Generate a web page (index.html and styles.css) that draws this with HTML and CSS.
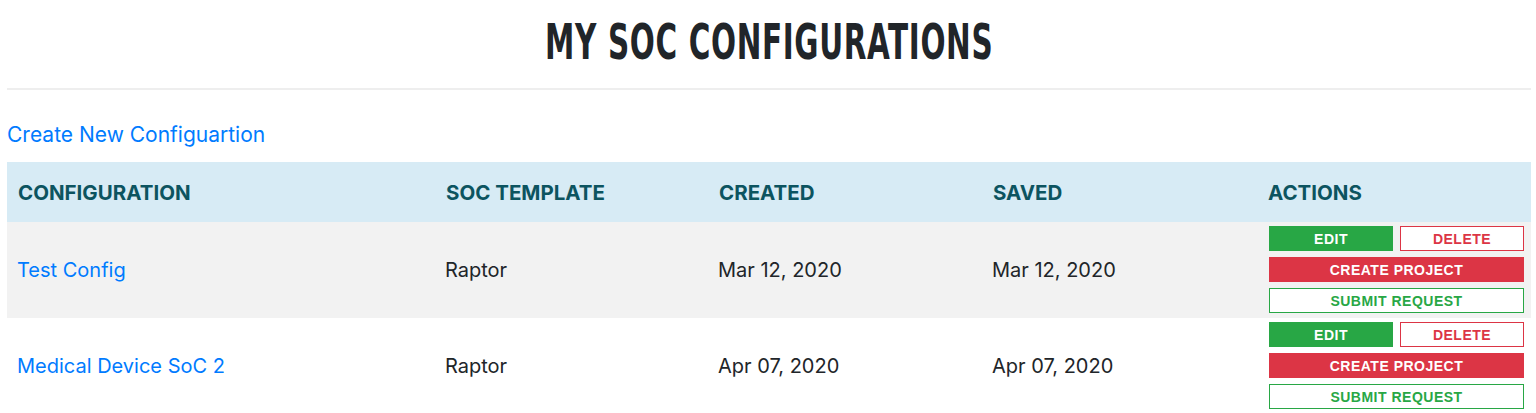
FILE: index.html
```html
<!DOCTYPE html>
<html lang="en">

<head>
  <meta charset="UTF-8">
  <meta name="viewport" content="width=device-width, initial-scale=1.0">
  <title>My SoC Configurations</title>
  <link rel="stylesheet" href="styles.css">
</head>

<body>
  <div class="page">
    <h1 class="title"><span>MY SOC CONFIGURATIONS</span></h1>

    <a class="create-link" href="#">Create New Configuartion</a>

    <table class="configs">
      <colgroup>
        <col style="width: 428px">
        <col style="width: 273px">
        <col style="width: 274px">
        <col style="width: 275px">
        <col>
      </colgroup>
      <thead>
        <tr>
          <th>Configuration</th>
          <th>SoC Template</th>
          <th>Created</th>
          <th>Saved</th>
          <th>Actions</th>
        </tr>
      </thead>
      <tbody>
        <tr>
          <td><a href="#">Test Config</a></td>
          <td>Raptor</td>
          <td>Mar 12, 2020</td>
          <td>Mar 12, 2020</td>
          <td class="actions">
            <div class="btn-grid">
              <button class="btn btn-success">Edit</button>
              <button class="btn btn-outline-danger">Delete</button>
              <button class="btn btn-danger wide">Create Project</button>
              <button class="btn btn-outline-success wide">Submit Request</button>
            </div>
          </td>
        </tr>
        <tr>
          <td><a href="#">Medical Device SoC 2</a></td>
          <td>Raptor</td>
          <td>Apr 07, 2020</td>
          <td>Apr 07, 2020</td>
          <td class="actions">
            <div class="btn-grid">
              <button class="btn btn-success">Edit</button>
              <button class="btn btn-outline-danger">Delete</button>
              <button class="btn btn-danger wide">Create Project</button>
              <button class="btn btn-outline-success wide">Submit Request</button>
            </div>
          </td>
        </tr>
      </tbody>
    </table>
  </div>
</body>

</html>
```

FILE: styles.css
```css
/* 基础排版 */
body {
  margin: 0;
  font-family: Inter, "Liberation Sans", Arial, sans-serif;
  color: #212529;
  background-color: #fff;
}

.page {
  padding: 0 5px 0 7px;
}

/* 页面标题：没有 Oswald，用压窄的粗体代替 */
.title {
  margin: 0;
  padding: 14px 0 18px;
  border-bottom: 2px solid #eeeeee;
  text-align: center;
  font-family: "DejaVu Sans Condensed", "DejaVu Sans", sans-serif;
  font-weight: 700;
  font-size: 50px;
  line-height: 56px;
  color: #212529;
}

.title span {
  display: inline-block;
  transform: scaleX(0.655);
  letter-spacing: 1px;
}

.create-link {
  display: block;
  margin: 30px 0 12px;
  font-size: 21px;
  line-height: 30px;
  color: #007bff;
  text-decoration: none;
}

/* 表格 */
.configs {
  width: 1524px;
  border-collapse: collapse;
  table-layout: fixed;
  font-size: 20px;
  border-bottom: 2px solid #eeeeee;
}

.configs th {
  height: 60px;
  padding: 0 11px;
  text-align: left;
  text-transform: uppercase;
  font-size: 20.5px;
  font-weight: 700;
  color: #0c5460;
  background-color: #d7ebf5;
}

.configs td {
  padding: 4px 10px 5px;
  vertical-align: middle;
}

.configs tbody tr:nth-child(odd) {
  background-color: #f2f2f2;
}

.configs td a {
  color: #007bff;
  text-decoration: none;
}

.configs td.actions {
  padding: 4px 7px 5px 12px;
}

/* 操作按钮 */
.btn-grid {
  display: grid;
  grid-template-columns: 1fr 1fr;
  gap: 6px 7px;
}

.btn {
  height: 25px;
  padding: 0;
  border: 1px solid transparent;
  font-family: "Liberation Sans", Arial, sans-serif;
  font-size: 14px;
  font-weight: 700;
  letter-spacing: 0.5px;
  text-transform: uppercase;
  cursor: pointer;
}

.btn.wide {
  grid-column: span 2;
}

.btn-success {
  background-color: #28a745;
  border-color: #28a745;
  color: #fff;
}

.btn-danger {
  background-color: #dc3545;
  border-color: #dc3545;
  color: #fff;
}

.btn-outline-danger {
  background-color: #fff;
  border-color: #dc3545;
  color: #dc3545;
}

.btn-outline-success {
  background-color: #fff;
  border-color: #28a745;
  color: #28a745;
}
```
